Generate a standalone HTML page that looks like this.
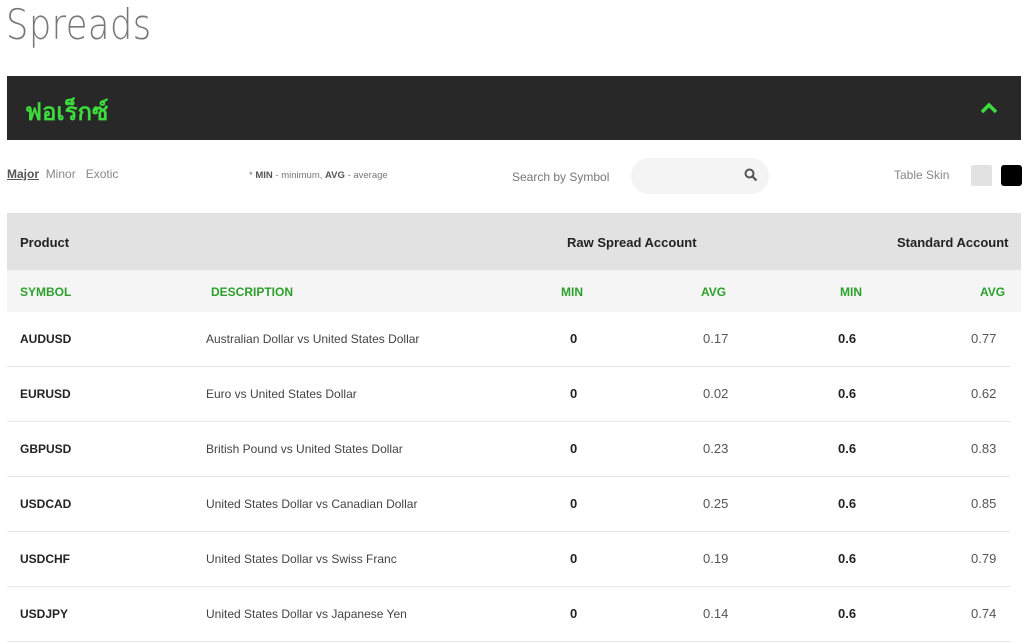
<!DOCTYPE html>
<html><head><meta charset="utf-8"><style>
*{margin:0;padding:0;box-sizing:border-box}
body{width:1024px;height:644px;overflow:hidden;background:#fff;font-family:"Liberation Sans",sans-serif;color:#222;position:relative}
.a{position:absolute;white-space:nowrap}
h1{position:absolute;left:6px;top:0;font-size:42px;color:#777;letter-spacing:0.5px;font-family:"DejaVu Sans","Liberation Sans",sans-serif;font-weight:200;transform:scaleX(0.84);transform-origin:0 0}
.bar{position:absolute;left:7px;top:76px;width:1014px;height:64px;background:#282828}
.th{position:absolute;left:7px;top:213px;width:1014px;height:57px;background:#e2e2e2}
.sh{position:absolute;left:7px;top:270px;width:1014px;height:42px;background:#f5f5f5}
.g{color:#2ca02c;font-weight:bold;font-size:12px}
.row{position:absolute;left:7px;width:1003px;height:55px;border-bottom:1px solid #e5e5e5}
.row span{position:absolute;top:20px;font-size:12px}
.row span.n{font-size:13px;top:19px}
</style></head><body>
<h1>Spreads</h1>
<div class="bar"></div>
<div class="a" style="left:25px;top:92px;font-size:24px;font-weight:bold;color:#3ddc3d;font-family:'Liberation Sans','Noto Sans CJK SC',sans-serif">ฟอเร็กซ์</div>
<svg class="a" style="left:980px;top:102px" width="18" height="12" viewBox="0 0 18 12"><path d="M2 10 L9 3 L16 10" stroke="#3ddc3d" stroke-width="3.5" fill="none"/></svg>
<div class="a" style="left:7px;top:167px;font-size:12px;color:#555"><u style="font-weight:bold">Major</u>&nbsp;&nbsp;<span style="color:#888">Minor&nbsp;&nbsp;&nbsp;Exotic</span></div>
<div class="a" style="left:249px;top:170px;font-size:9.5px;color:#777">* <b style="color:#555">MIN</b> - minimum, <b style="color:#555">AVG</b> - average</div>
<div class="a" style="left:512px;top:170px;font-size:12px;color:#777">Search by Symbol</div>
<div class="a" style="left:631px;top:158px;width:138px;height:36px;border-radius:18px;background:#f4f4f4"></div>
<svg class="a" style="left:744px;top:168px" width="14" height="14" viewBox="0 0 14 14"><circle cx="5.5" cy="5.5" r="4" stroke="#555" stroke-width="2" fill="none"/><path d="M8.5 8.5 L12.5 12.5" stroke="#555" stroke-width="2.2"/></svg>
<div class="a" style="left:894px;top:168px;font-size:12px;color:#888">Table Skin</div>
<div class="a" style="left:971px;top:165px;width:21px;height:21px;background:#e2e2e2;border-radius:2px"></div>
<div class="a" style="left:1001px;top:165px;width:21px;height:21px;background:#000;border-radius:3px"></div>
<div class="th"></div><div class="sh"></div>
<div class="a" style="left:20px;top:235px;font-size:13px;font-weight:bold;color:#222">Product</div>
<div class="a" style="left:567px;top:235px;font-size:13px;font-weight:bold;color:#222">Raw Spread Account</div>
<div class="a" style="left:897px;top:235px;font-size:13px;font-weight:bold;color:#222">Standard Account</div>
<div class="a g" style="left:20px;top:285px">SYMBOL</div>
<div class="a g" style="left:211px;top:285px">DESCRIPTION</div>
<div class="a g" style="left:561px;top:285px">MIN</div>
<div class="a g" style="left:701px;top:285px">AVG</div>
<div class="a g" style="left:840px;top:285px">MIN</div>
<div class="a g" style="left:980px;top:285px">AVG</div>
<div class="row" style="top:312px"><span style="left:13px;font-weight:bold">AUDUSD</span><span style="left:199px;color:#444">Australian Dollar vs United States Dollar</span><span class="n" style="left:563px;font-weight:bold">0</span><span class="n" style="left:696px;color:#555">0.17</span><span class="n" style="left:831px;font-weight:bold">0.6</span><span class="n" style="left:964px;color:#555">0.77</span></div>
<div class="row" style="top:367px"><span style="left:13px;font-weight:bold">EURUSD</span><span style="left:199px;color:#444">Euro vs United States Dollar</span><span class="n" style="left:563px;font-weight:bold">0</span><span class="n" style="left:696px;color:#555">0.02</span><span class="n" style="left:831px;font-weight:bold">0.6</span><span class="n" style="left:964px;color:#555">0.62</span></div>
<div class="row" style="top:422px"><span style="left:13px;font-weight:bold">GBPUSD</span><span style="left:199px;color:#444">British Pound vs United States Dollar</span><span class="n" style="left:563px;font-weight:bold">0</span><span class="n" style="left:696px;color:#555">0.23</span><span class="n" style="left:831px;font-weight:bold">0.6</span><span class="n" style="left:964px;color:#555">0.83</span></div>
<div class="row" style="top:477px"><span style="left:13px;font-weight:bold">USDCAD</span><span style="left:199px;color:#444">United States Dollar vs Canadian Dollar</span><span class="n" style="left:563px;font-weight:bold">0</span><span class="n" style="left:696px;color:#555">0.25</span><span class="n" style="left:831px;font-weight:bold">0.6</span><span class="n" style="left:964px;color:#555">0.85</span></div>
<div class="row" style="top:532px"><span style="left:13px;font-weight:bold">USDCHF</span><span style="left:199px;color:#444">United States Dollar vs Swiss Franc</span><span class="n" style="left:563px;font-weight:bold">0</span><span class="n" style="left:696px;color:#555">0.19</span><span class="n" style="left:831px;font-weight:bold">0.6</span><span class="n" style="left:964px;color:#555">0.79</span></div>
<div class="row" style="top:587px"><span style="left:13px;font-weight:bold">USDJPY</span><span style="left:199px;color:#444">United States Dollar vs Japanese Yen</span><span class="n" style="left:563px;font-weight:bold">0</span><span class="n" style="left:696px;color:#555">0.14</span><span class="n" style="left:831px;font-weight:bold">0.6</span><span class="n" style="left:964px;color:#555">0.74</span></div>
</body></html>
